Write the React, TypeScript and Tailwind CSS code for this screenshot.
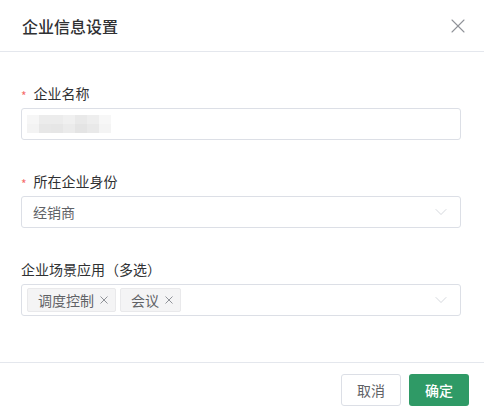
import { ChevronDown, X } from "lucide-react";

const blur = [
  ["#f6f6f6", "#ececec", "#ececec", "#f0f0f0", "#e9e9e9", "#eeeeee", "#f7f7f7"],
  ["#f3f3f3", "#e7e7e7", "#e6e6e6", "#ebebeb", "#e4e4e4", "#e9e9e9", "#f4f4f4"],
];

function Label({ text, required }: { text: string; required?: boolean }) {
  return (
    <div className="flex h-[22px] items-center text-[14px] text-[#303133]">
      {required && <span className="mr-[7px] mt-[5px] text-[12px] text-[#f56c6c]">*</span>}
      {text}
    </div>
  );
}

function Chevron() {
  return <ChevronDown className="ml-auto h-5 w-5 text-[#c0c4cc]" strokeWidth={0.8} />;
}

function Tag({ text }: { text: string }) {
  return (
    <div className="flex h-6 items-center gap-[5px] rounded-[2px] border border-[#e9e9eb] bg-[#f4f4f5] pl-[10px] pr-[6px] text-[14px] text-[#606266]">
      {text}
      <svg viewBox="0 0 10 10" className="h-[10px] w-[10px] text-[#909399]">
        <path d="M1.5 1.5 L8.5 8.5 M8.5 1.5 L1.5 8.5" stroke="currentColor" strokeWidth="1" fill="none" />
      </svg>
    </div>
  );
}

export default function App() {
  return (
    <div
      className="h-[415px] w-[484px] overflow-hidden bg-white"
      style={{ fontFamily: '"Noto Sans CJK SC", "Noto Sans", sans-serif' }}
    >
      <div className="flex h-[52px] items-center justify-between border-b border-[#e4e7ed] pl-[22px] pr-[14px]">
        <span className="text-[16px] font-medium text-[#303133]">企业信息设置</span>
        <X className="h-6 w-6 text-[#909399]" strokeWidth={1.1} />
      </div>

      <div className="px-[21px] pt-[30px] pb-[46px]">
        <Label text="企业名称" required />
        <div className="mt-1 flex h-8 w-[440px] items-center rounded-[3px] border border-[#dcdfe6] pl-[5px]">
          <div className="flex flex-col">
            {blur.map((row, i) => (
              <div key={i} className="flex">
                {row.map((c, j) => (
                  <div key={j} className="h-[9px] w-[12px]" style={{ background: c }} />
                ))}
              </div>
            ))}
          </div>
        </div>

        <div className="mt-[30px]">
          <Label text="所在企业身份" required />
        </div>
        <div className="mt-1 flex h-8 w-[440px] items-center rounded-[3px] border border-[#dcdfe6] pl-[11px] pr-[9px] text-[14px] text-[#606266]">
          经销商
          <Chevron />
        </div>

        <div className="mt-[30px]">
          <Label text="企业场景应用（多选）" />
        </div>
        <div className="mt-1 flex h-8 w-[440px] items-center gap-1 rounded-[3px] border border-[#dcdfe6] pl-[5px] pr-[9px]">
          <Tag text="调度控制" />
          <Tag text="会议" />
          <Chevron />
        </div>
      </div>

      <div className="flex justify-end gap-2 border-t border-[#e4e7ed] pt-[11px] pr-[15px]">
        <button className="h-8 w-[60px] rounded-[3px] border border-[#dcdfe6] bg-white text-[14px] text-[#606266]">
          取消
        </button>
        <button className="h-8 w-[60px] rounded-[3px] bg-[#2f9a66] text-[14px] font-medium text-white">
          确定
        </button>
      </div>
    </div>
  );
}
